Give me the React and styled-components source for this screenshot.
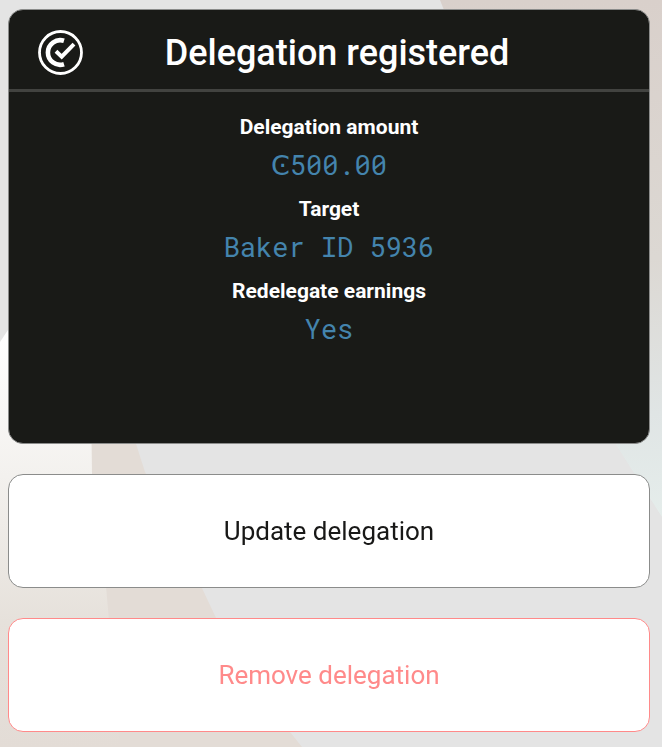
import React from "react";
import styled, { createGlobalStyle, css } from "styled-components";

const GlobalStyle = createGlobalStyle`
  *, *::before, *::after { box-sizing: border-box; }
  html { background: #e4e4e4; }
  body { margin: 0; font-family: Roboto, "Liberation Sans", sans-serif; }
`;

const Backdrop = styled.svg`
  position: fixed;
  inset: 0;
  width: 100%;
  height: 100%;
  z-index: -1;
`;

const Page = styled.main`
  display: flex;
  flex-direction: column;
  gap: 30px;
  padding: 9px 12px 15px 8px;
`;

const panel = css`
  border: 1px solid #8b8c8b;
  border-radius: 15px;
`;

const Card = styled.section`
  ${panel}
  min-height: 435px;
  overflow: hidden;
  background: #191a17;
  color: #fff;
`;

const CardHeader = styled.header`
  display: grid;
  grid-template-columns: 46px 1fr 30px;
  align-items: center;
  height: 82px;
  padding: 6px 28px 0;
  border-bottom: 3px solid #424340;
`;

const Logo = styled.svg`
  width: 46px;
  height: 46px;
`;

const Title = styled.h1`
  margin: 0;
  font-size: 36px;
  line-height: 44px;
  font-weight: 500;
  text-align: center;
`;

const Details = styled.dl`
  display: flex;
  flex-direction: column;
  gap: 13px;
  margin: 0;
  padding: 22px 28px;
  text-align: center;
`;

const Detail = styled.div`
  display: flex;
  flex-direction: column;
  gap: 7px;
`;

const Label = styled.dt`
  font-size: 21px;
  line-height: 26px;
  font-weight: 700;
`;

const Value = styled.dd`
  margin: 0;
  height: 36px;
  font-family: "Roboto Mono", "Liberation Mono", monospace;
  font-size: 27px;
  line-height: 35px;
  color: #4484ad;
`;

const CurrencySymbol = styled.span`
  font-family: "DejaVu Sans", sans-serif;
  line-height: 1;
`;

const Action = styled.button`
  ${panel}
  height: 114px;
  padding: 0 28px;
  background: #fff;
  color: ${(p) => (p.$danger ? "#ff8a8a" : "#181817")};
  border-color: ${(p) => (p.$danger ? "#ff8a8a" : "#8b8c8b")};
  font-family: inherit;
  font-size: 26px;
  line-height: 32px;
  font-weight: 400;
  cursor: pointer;
`;

const details = [
  { label: "Delegation amount", symbol: "Ͼ", value: "500.00" },
  { label: "Target", value: "Baker ID 5936" },
  { label: "Redelegate earnings", value: "Yes" },
];

export default function App() {
  return (
    <>
      <GlobalStyle />
      <Backdrop viewBox="0 0 662 747" preserveAspectRatio="none" aria-hidden="true">
        <defs>
          <linearGradient id="pale" x1="0" y1="0" x2="0" y2="1">
            <stop offset="0" stopColor="#ffffff" />
            <stop offset="0.35" stopColor="#f3f1ee" />
            <stop offset="0.7" stopColor="#e6e1db" />
            <stop offset="1" stopColor="#e3dcd6" />
          </linearGradient>
          <linearGradient id="cool" x1="0" y1="0" x2="0" y2="1">
            <stop offset="0" stopColor="#d9d0cb" />
            <stop offset="0.5" stopColor="#dcd8d3" />
            <stop offset="0.8" stopColor="#e0e5e5" />
            <stop offset="1" stopColor="#e5edeb" />
          </linearGradient>
        </defs>
        <path d="M0 342 L8 330 L100 400 L130 747 H0Z" fill="url(#pale)" />
        <path d="M91 400 H122 L145 472 L201 586 L217 620 L290 732 L302 747 H120 L106 586 L92 474Z" fill="#e3dcd6" />
        <path d="M440 0 H662 V517 L615 443Z" fill="url(#cool)" />
      </Backdrop>
      <Page>
        <Card>
          <CardHeader>
            <Logo viewBox="0 0 46 46" fill="none" stroke="#fff" aria-hidden="true">
              <circle cx="23.5" cy="22.5" r="21" strokeWidth="2.8" />
              <path d="M27 10.8A12.3 12.3 0 1 0 27 34.2" strokeWidth="4.6" />
              <path d="M19 21.3L24.7 26.6L37 14.2" strokeWidth="4" />
            </Logo>
            <Title>Delegation registered</Title>
          </CardHeader>
          <Details>
            {details.map((d) => (
              <Detail key={d.label}>
                <Label>{d.label}</Label>
                <Value>
                  {d.symbol && <CurrencySymbol>{d.symbol}</CurrencySymbol>}
                  {d.value}
                </Value>
              </Detail>
            ))}
          </Details>
        </Card>
        <Action type="button">Update delegation</Action>
        <Action type="button" $danger>Remove delegation</Action>
      </Page>
    </>
  );
}
